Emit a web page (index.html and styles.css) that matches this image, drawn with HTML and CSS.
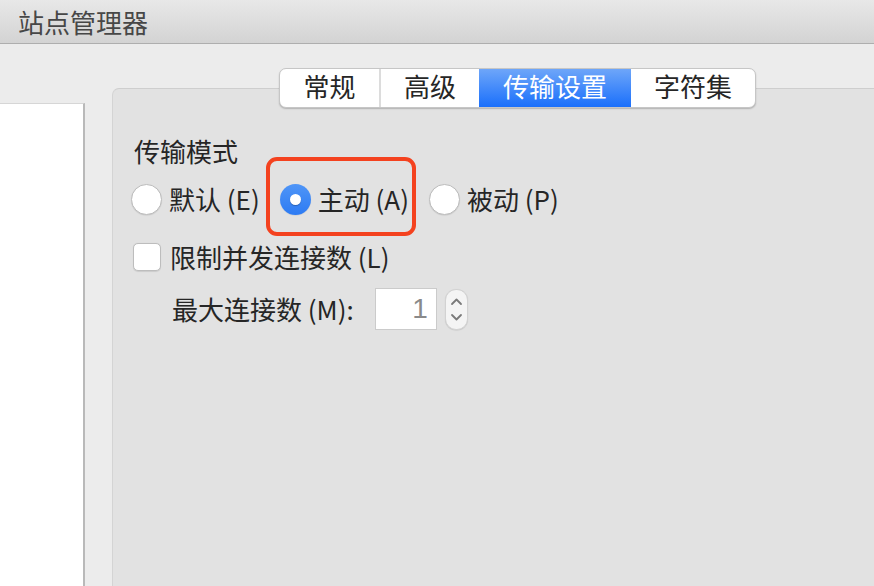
FILE: index.html
```html
<!DOCTYPE html>
<html lang="zh-CN">
<head>
<meta charset="utf-8">
<title>站点管理器</title>
<link rel="stylesheet" href="styles.css">
</head>
<body>
<div class="window">
  <header class="titlebar"><span class="title">站点管理器</span></header>
  <div class="main">
    <aside class="sidebar"></aside>
    <section class="tabview">
      <nav class="segmented">
        <span class="seg seg-1">常规</span>
        <span class="seg seg-2">高级</span>
        <span class="seg seg-3 active">传输设置</span>
        <span class="seg seg-4">字符集</span>
      </nav>
      <div class="pane">
        <div class="group-label">传输模式</div>
        <div class="radio-row">
          <label class="radio"><span class="radio-btn"></span><span class="radio-text">默认 (E)</span></label>
          <label class="radio checked highlight"><span class="radio-btn"><span class="dot"></span></span><span class="radio-text">主动 (A)</span></label>
          <label class="radio"><span class="radio-btn"></span><span class="radio-text">被动 (P)</span></label>
        </div>
        <label class="check-row"><span class="checkbox"></span><span class="check-text">限制并发连接数 (L)</span></label>
        <div class="max-row">
          <span class="max-label">最大连接数 (M):</span>
          <span class="field">1</span>
          <span class="stepper">
            <svg width="23" height="41" viewBox="0 0 23 41">
              <path d="M7 15 L11.5 10.5 L16 15" fill="none" stroke="#7a7a7a" stroke-width="1.8" stroke-linecap="round" stroke-linejoin="round"/>
              <path d="M7 26 L11.5 30.5 L16 26" fill="none" stroke="#7a7a7a" stroke-width="1.8" stroke-linecap="round" stroke-linejoin="round"/>
            </svg>
          </span>
        </div>
      </div>
    </section>
  </div>
</div>
</body>
</html>
```
FILE: styles.css
```css
* { box-sizing: border-box; }
html, body { margin: 0; padding: 0; }
body {
  font-family: "Noto Sans CJK SC", "Noto Sans", sans-serif;
  color: #262626;
  background: #ececec;
}
.window {
  width: 874px;
  height: 586px;
  overflow: hidden;
  background: #ececec;
  display: flex;
  flex-direction: column;
}
.titlebar {
  height: 44px;
  flex: none;
  background: linear-gradient(#e8e8e8, #d3d3d3);
  border-bottom: 1px solid #aeaeae;
  display: flex;
  align-items: center;
  padding-left: 18px;
}
.title {
  font-size: 26px;
  line-height: 30px;
  color: #474747;
  margin-top: 0;
}
.main {
  flex: 1;
  display: flex;
  min-height: 0;
}
.sidebar {
  width: 85px;
  flex: none;
  margin-top: 59px;
  background: #fff;
  border-right: 2px solid #b9b9b9;
  border-top: 1px solid #d6d6d6;
}
.tabview {
  flex: 1;
  margin-left: 27px;
  margin-top: 44px;
  background: #e2e2e2;
  border-top: 1px solid #cecece;
  border-left: 1px solid #d4d4d4;
  border-top-left-radius: 7px;
  display: flex;
  flex-direction: column;
}
.segmented {
  display: flex;
  align-self: flex-start;
  margin-left: 166px;
  margin-top: -21px;
  height: 40px;
  background: #fff;
  border: 1px solid #c6c6c6;
  border-radius: 7px;
  box-shadow: 0 1px 1.5px rgba(0,0,0,0.22);
  overflow: hidden;
}
.seg {
  display: flex;
  align-items: center;
  justify-content: center;
  font-size: 26px;
  line-height: 30px;
  padding-bottom: 4px;
  color: #262626;
  border-right: 2px solid #dcdcdc;
}
.seg-1 { width: 101px; }
.seg-2 { width: 98px; border-right: none; }
.seg-3 { width: 152px; border-right: none; }
.seg-4 { width: 124px; border-right: none; }
.seg.active {
  background: linear-gradient(#6ea6f9, #1a6ffb);
  color: #fff;
}
.pane {
  padding-left: 18px;
  display: flex;
  flex-direction: column;
  align-items: flex-start;
}
.group-label {
  font-size: 26px;
  line-height: 30px;
  margin-top: 28px;
  margin-left: 3px;
}
.radio-row {
  display: flex;
  align-items: center;
  height: 32px;
  margin-top: 17px;
}
.radio {
  position: relative;
  display: flex;
  align-items: center;
  margin-right: 20px;
}
.radio-btn {
  width: 31px;
  height: 31px;
  border-radius: 50%;
  background: #fff;
  border: 1px solid #bdbdbd;
  box-shadow: 0 0.5px 1px rgba(0,0,0,0.12);
  display: flex;
  align-items: center;
  justify-content: center;
  flex: none;
}
.radio.checked .radio-btn {
  background: linear-gradient(#4f95f7, #2d7bf3);
  border: none;
}
.dot {
  width: 11px;
  height: 11px;
  border-radius: 50%;
  background: #fff;
  box-shadow: 0 1px 1px rgba(0,0,0,0.25);
}
.radio-text {
  font-size: 26px;
  line-height: 30px;
  margin-left: 7px;
}
.radio.highlight::after {
  content: "";
  position: absolute;
  left: -14px;
  right: -7px;
  top: -27px;
  bottom: -21px;
  border: 4px solid #f4421f;
  border-radius: 11px;
}
.check-row {
  display: flex;
  align-items: center;
  height: 30px;
  margin-top: 27px;
  margin-left: 2px;
}
.checkbox {
  width: 28px;
  height: 28px;
  border-radius: 5px;
  background: #fff;
  border: 1px solid #bdbdbd;
  box-shadow: 0 0.5px 1px rgba(0,0,0,0.1);
  flex: none;
}
.check-text {
  font-size: 26px;
  line-height: 30px;
  margin-left: 9px;
}
.max-row {
  display: flex;
  align-items: center;
  height: 42px;
  margin-top: 16px;
  margin-left: 41px;
}
.max-label {
  font-size: 26px;
  line-height: 30px;
  margin-right: 21px;
}
.field {
  width: 62px;
  height: 42px;
  background: #fff;
  border: 1px solid #cbcbcb;
  font-family: "Liberation Sans", "Noto Sans CJK SC", sans-serif;
  font-size: 28px;
  color: #8a8a8a;
  text-align: right;
  padding-right: 8px;
  line-height: 40px;
}
.stepper {
  width: 23px;
  height: 41px;
  margin-left: 8px;
  border-radius: 11px;
  background: #f4f4f4;
  border: 1px solid #d2d2d2;
  box-shadow: 0 0.5px 1px rgba(0,0,0,0.12);
  display: flex;
  align-items: center;
  justify-content: center;
  overflow: hidden;
}
.stepper svg { display: block; flex: none; }
```
